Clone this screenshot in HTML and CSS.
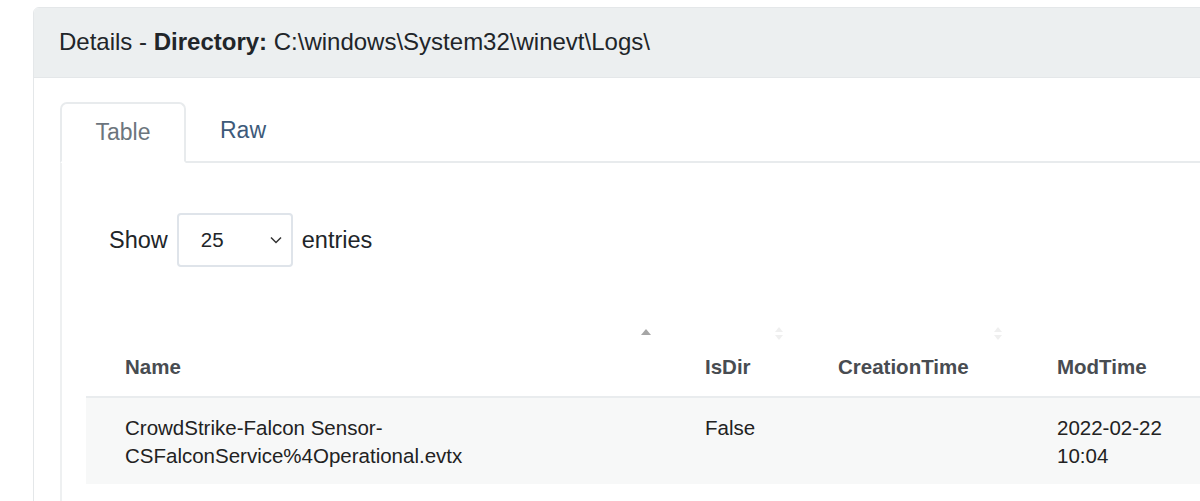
FILE: index.html
```html
<!DOCTYPE html>
<html>
<head>
<meta charset="utf-8">
<link rel="stylesheet" href="styles.css">
</head>
<body>
<div class="page">
  <div class="card">
    <div class="card-header">Details -&nbsp;<b>Directory:</b>&nbsp;C:\windows\System32\winevt\Logs\</div>
    <div class="card-body">
      <div class="tabs">
        <div class="tab active">Table</div>
        <div class="tab">Raw</div>
      </div>
      <div class="tab-content">
        <div class="length">
          <span>Show</span>
          <div class="select"><span>25</span>
            <svg class="chev" width="12" height="8" viewBox="0 0 12 8"><path d="M1 1.5 L6 6.5 L11 1.5" fill="none" stroke="#333" stroke-width="1.5"/></svg>
          </div>
          <span>entries</span>
        </div>
        <table class="grid">
          <colgroup><col class="c1"><col class="c2"><col class="c3"><col class="c4"></colgroup>
          <thead>
            <tr>
              <th>Name<span class="sort asc"></span></th>
              <th>IsDir<span class="sort both"></span></th>
              <th>CreationTime<span class="sort both"></span></th>
              <th>ModTime<span class="sort both"></span></th>
            </tr>
          </thead>
          <tbody>
            <tr>
              <td>CrowdStrike-Falcon Sensor-<br>CSFalconService%4Operational.evtx</td>
              <td>False</td>
              <td></td>
              <td>2022-02-22<br>10:04</td>
            </tr>
          </tbody>
        </table>
      </div>
    </div>
  </div>
</div>
</body>
</html>
```
FILE: styles.css
```css
html, body { margin: 0; padding: 0; overflow: hidden; background: #fff; }
body { font-family: "Liberation Sans", Arial, sans-serif; color: #212529; width: 1200px; height: 501px; }
.page { padding: 7px 0 0 33px; height: 494px; overflow: hidden; }
.card { width: 1260px; border: 1px solid #e4e7e9; border-radius: 6px; overflow: hidden; }
.card-header { background: #eceff0; border-bottom: 1px solid #e4e7e9; display: flex; align-items: center; padding-left: 25px; font-size: 24px; padding-bottom: 1px; box-sizing: border-box; height: 70px; }
.card-header b { font-weight: bold; }
.card-body { padding: 24px 0 0 26px; }
.tabs { display: flex; border-bottom: 2px solid #e8ebed; height: 61px; box-sizing: border-box; }
.tab { padding: 0 34px; font-size: 23px; color: #3d5a7a; display: flex; align-items: center; padding-bottom: 2px; }
.tab.active { color: #6c757d; border: 2px solid #e8ebed; border-bottom: 2px solid #fff; border-radius: 7px 7px 0 0; margin-bottom: -2px; padding: 0 33px; width: 56px; justify-content: center; }
.tab-content { border-left: 2px solid #eef0f1; padding: 50px 0 0 24px; height: 340px; }
.length { display: flex; align-items: center; font-size: 23.5px; padding-left: 23px; }
.select { width: 116px; height: 54px; box-sizing: border-box; border: 2px solid #dfe4ea; border-radius: 4px; margin: 0 9px; display: flex; align-items: center; justify-content: space-between; padding: 0 9px 0 22px; font-size: 20.5px; }
.chev { display: block; }
.grid { border-collapse: collapse; table-layout: fixed; width: 1200px; margin-top: 50px; font-size: 20.5px; }
.c1 { width: 580px; } .c2 { width: 133px; } .c3 { width: 219px; } .c4 { width: 268px; }
.grid th { position: relative; text-align: left; padding: 36px 20px 15px 39px; line-height: 28px; border-bottom: 2px solid #e9ecee; color: #484c51; font-weight: bold; }
.grid td { padding: 16px 20px 14px 39px; line-height: 28px; vertical-align: top; background: #f7f8f8; color: #222; }
.sort { position: absolute; right: 16px; top: 10px; width: 8px; height: 14px; }
.sort.asc::before { content: ""; position: absolute; left: -1px; top: 2px; border-left: 5px solid transparent; border-right: 5px solid transparent; border-bottom: 6px solid #a6a6a6; }
.sort.both::before { content: ""; position: absolute; left: 0; top: 0; border-left: 4px solid transparent; border-right: 4px solid transparent; border-bottom: 5px solid #efefef; }
.sort.both::after { content: ""; position: absolute; left: 0; top: 8px; border-left: 4px solid transparent; border-right: 4px solid transparent; border-top: 5px solid #efefef; }
```
